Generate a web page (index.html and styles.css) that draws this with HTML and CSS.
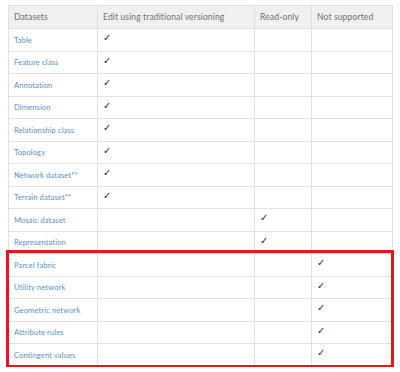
FILE: index.html
```html
<!DOCTYPE html>
<html lang="en">
<head>
  <meta charset="UTF-8" />
  <title>Dataset editing support</title>
  <link rel="stylesheet" href="styles.css">
</head>
<body>
  <div class="wrap">
    <table class="support">
      <thead>
        <tr>
          <th class="col-name">Datasets</th>
          <th class="col-edit">Edit using traditional versioning</th>
          <th class="col-read">Read-only</th>
          <th class="col-none">Not supported</th>
        </tr>
      </thead>
      <tbody>
        <tr><td><a href="#">Table</a></td><td class="check">✓</td><td></td><td></td></tr>
        <tr><td><a href="#">Feature class</a></td><td class="check">✓</td><td></td><td></td></tr>
        <tr><td><a href="#">Annotation</a></td><td class="check">✓</td><td></td><td></td></tr>
        <tr><td><a href="#">Dimension</a></td><td class="check">✓</td><td></td><td></td></tr>
        <tr><td><a href="#">Relationship class</a></td><td class="check">✓</td><td></td><td></td></tr>
        <tr><td><a href="#">Topology</a></td><td class="check">✓</td><td></td><td></td></tr>
        <tr><td><a href="#">Network dataset**</a></td><td class="check">✓</td><td></td><td></td></tr>
        <tr><td><a href="#">Terrain dataset**</a></td><td class="check">✓</td><td></td><td></td></tr>
        <tr><td><a href="#">Mosaic dataset</a></td><td></td><td class="check">✓</td><td></td></tr>
        <tr><td><a href="#">Representation</a></td><td></td><td class="check">✓</td><td></td></tr>
        <tr><td><a href="#">Parcel fabric</a></td><td></td><td></td><td class="check">✓</td></tr>
        <tr><td><a href="#">Utility network</a></td><td></td><td></td><td class="check">✓</td></tr>
        <tr><td><a href="#">Geometric network</a></td><td></td><td></td><td class="check">✓</td></tr>
        <tr><td><a href="#">Attribute rules</a></td><td></td><td></td><td class="check">✓</td></tr>
        <tr><td><a href="#">Contingent values</a></td><td></td><td></td><td class="check">✓</td></tr>
      </tbody>
    </table>
    <div class="highlight"></div>
  </div>
</body>
</html>
```

FILE: styles.css
```css
* { margin: 0; padding: 0; box-sizing: border-box; }
body {
  font-family: 'Lato', 'Open Sans', sans-serif;
  background: #ffffff;
  color: #595959;
  padding: 5px 0 0 8px;
}
.wrap {
  position: relative;
  width: 384px;
}
.support {
  width: 384px;
  border-collapse: collapse;
  table-layout: fixed;
}
.support th,
.support td {
  border: 1px solid #e0e0e0;
  height: 22.5px;
  padding: 0 5px;
  text-align: left;
  vertical-align: middle;
}
.support th {
  height: 23px;
  background: #f0f0f0;
  font-weight: normal;
  font-size: 8.6px;
  letter-spacing: 0.1px;
  color: #707070;
}
.col-name { width: 89px; }
.col-edit { width: 157px; }
.col-read { width: 57px; }
.col-none { width: 81px; }
.support td {
  font-size: 7.6px;
  letter-spacing: 0.1px;
}
.support a {
  color: #5b8fca;
  text-decoration: none;
}
.support .check {
  font-family: 'DejaVu Sans', sans-serif;
  font-size: 10px;
  letter-spacing: 0;
  color: #2a2a2a;
  vertical-align: top;
  padding-top: 4px;
  line-height: 1;
}
.highlight {
  position: absolute;
  left: -2px;
  top: 245px;
  width: 388px;
  height: 118px;
  border: 3px solid #e8141f;
}
```
